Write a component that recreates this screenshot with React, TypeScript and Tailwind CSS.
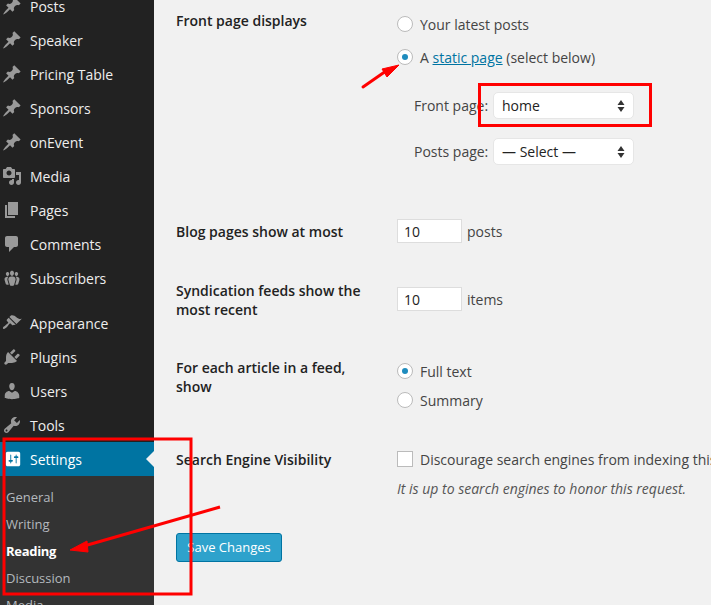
const icons = {
  pin: 'M10.44 3.02l1.82-1.82 6.36 6.35-1.83 1.82c-1.05-.68-2.48-.57-3.41.36l-.75.75c-.92.93-1.04 2.35-.35 3.41l-1.83 1.82-2.41-2.41-2.8 2.79c-.42.42-3.38 2.71-3.8 2.29s1.86-3.39 2.28-3.81l2.79-2.79L4.1 9.36l1.83-1.82c1.05.69 2.48.57 3.4-.36l.75-.75c.93-.92 1.05-2.35.36-3.41z',
  media: 'M13 11V4c0-.55-.45-1-1-1h-1.67L9 1H5L3.67 3H2c-.55 0-1 .45-1 1v7c0 .55.45 1 1 1h10c.55 0 1-.45 1-1zM7 4.5c1.38 0 2.5 1.12 2.5 2.5S8.38 9.5 7 9.5 4.5 8.38 4.5 7 5.62 4.5 7 4.5zM14 6h5v10.5c0 1.38-1.12 2.5-2.5 2.5S14 17.88 14 16.5s1.12-2.5 2.5-2.5c.17 0 .34.02.5.05V9h-3V6zm-4 8.05V13h2v3.5c0 1.38-1.12 2.5-2.5 2.5S7 17.88 7 16.5 8.12 14 9.5 14c.17 0 .34.02.5.05z',
  pages: 'M6 15V2h10v13H6zm-1 1h8v2H3V5h2v11z',
  comments: 'M5 2h9c1.1 0 2 .9 2 2v7c0 1.1-.9 2-2 2h-2l-5 5v-5H5c-1.1 0-2-.9-2-2V4c0-1.1.9-2 2-2z',
  groups: 'M8.03 4.46c-.29 1.28.55 3.46 1.97 3.46 1.41 0 2.25-2.18 1.96-3.46-.22-.98-1.08-1.63-1.96-1.63-.89 0-1.74.65-1.97 1.63zm-4.13.9c-.25 1.08.47 2.93 1.67 2.93s1.92-1.85 1.67-2.93c-.19-.83-.92-1.39-1.67-1.39s-1.48.56-1.67 1.39zm8.86 0c-.25 1.08.47 2.93 1.66 2.93 1.2 0 1.92-1.85 1.67-2.93-.19-.83-.92-1.39-1.67-1.39-.74 0-1.47.56-1.66 1.39zm-.59 11.43l1.25-4.3C14.2 10 12.71 8.47 10 8.47c-2.72 0-4.21 1.53-3.44 4.02l1.26 4.3C8.05 17.51 9 18 10 18c.98 0 1.94-.49 2.17-1.21zm-6.1-7.63c-.49.67-.96 1.83-.42 3.59l1.12 3.79c-.34.2-.77.31-1.2.31-.85 0-1.65-.41-1.85-1.03l-1.07-3.65c-.65-2.11.61-3.4 2.92-3.4.27 0 .54.02.79.06-.1.1-.2.22-.29.33zm8.35-.39c2.31 0 3.58 1.29 2.92 3.4l-1.07 3.65c-.2.62-1 1.03-1.85 1.03-.43 0-.86-.11-1.2-.31l1.11-3.77c.55-1.78.08-2.94-.42-3.61-.08-.11-.18-.23-.28-.33.25-.04.51-.06.79-.06z',
  appearance: 'M14.48 11.06L7.41 3.99l1.5-1.5c.5-.56 2.3-.47 3.51.32 1.21.8 1.43 1.28 2.91 2.1 1.18.64 2.45 1.26 4.45.85zm-.71.71L6.7 4.7 4.93 6.47c-.39.39-.39 1.02 0 1.41l1.06 1.06c.39.39.39 1.03 0 1.42-.6.6-1.43 1.11-2.21 1.69-.35.26-.7.53-1.01.84C1.43 13.23.4 14.85 1.2 15.65c.8.8 2.42-.23 3.76-1.57.31-.31.58-.66.85-1.02.57-.78 1.08-1.61 1.69-2.21.39-.39 1.02-.39 1.41 0l1.06 1.06c.39.39 1.02.39 1.41 0z',
  plugins: 'M13.11 4.36L9.87 7.6 8 5.73l3.24-3.24c.35-.34 1.05-.2 1.56.32.52.51.66 1.21.31 1.55zm-8 1.77l.91-1.12 9.01 9.01-1.19.84c-.71.71-2.63 1.16-3.82 1.16H6.14L4.9 17.26c-.59.59-1.54.59-2.12 0-.59-.58-.59-1.53 0-2.12l1.24-1.24v-3.88c0-1.13.4-3.19 1.09-3.89zm7.26 3.97l3.24-3.24c.34-.35 1.04-.21 1.55.31.52.51.66 1.21.31 1.55l-3.24 3.25z',
  users: 'M10 9.25c-2.27 0-2.73-3.44-2.73-3.44C7 4.02 7.82 2 9.97 2c2.16 0 2.98 2.02 2.71 3.81 0 0-.41 3.44-2.68 3.44zm0 2.57L12.72 10c2.39 0 4.52 2.33 4.52 4.53v2.49s-3.65 1.13-7.24 1.13c-3.65 0-7.24-1.13-7.24-1.13v-2.49c0-2.25 1.94-4.48 4.47-4.48z',
  tools: 'M16.68 9.77c-1.34 1.34-3.3 1.67-4.95.99l-5.41 6.52c-.99.99-2.59.99-3.58 0s-.99-2.59 0-3.57l6.52-5.42c-.68-1.65-.35-3.61.99-4.95 1.28-1.28 3.12-1.62 4.72-1.06l-2.89 2.89 2.82 2.82 2.86-2.87c.53 1.58.18 3.39-1.08 4.65zM3.81 16.21c.4.39 1.04.39 1.43 0 .4-.4.4-1.04 0-1.43-.39-.4-1.03-.4-1.43 0-.39.39-.39 1.03 0 1.43z',
  settings: 'M18 16V4c0-1.1-.9-2-2-2H4c-1.1 0-2 .9-2 2v12c0 1.1.9 2 2 2h12c1.1 0 2-.9 2-2zM8 11h1c.55 0 1 .45 1 1s-.45 1-1 1H8v1.5c0 .28-.22.5-.5.5s-.5-.22-.5-.5V13H6c-.55 0-1-.45-1-1s.45-1 1-1h1V5.5c0-.28.22-.5.5-.5s.5.22.5.5V11zm5-2h-1c-.55 0-1-.45-1-1s.45-1 1-1h1V5.5c0-.28.22-.5.5-.5s.5.22.5.5V7h1c.55 0 1 .45 1 1s-.45 1-1 1h-1v5.5c0 .28-.22.5-.5.5s-.5-.22-.5-.5V9z',
};

function MenuIcon({ d, className = 'ml-[2px] h-5 w-5 text-[#999]' }: { d: string; className?: string }) {
  return (
    <svg viewBox="0 0 20 20" className={`mr-[8px] shrink-0 ${className}`} fill="currentColor">
      <path d={d} fillRule="evenodd" />
    </svg>
  );
}

function MenuItem({ label, icon }: { label: string; icon: string }) {
  return (
    <div className="flex h-[34px] items-center text-[14px] text-[#eee]">
      <MenuIcon d={icon} />
      {label}
    </div>
  );
}

function Radio({ checked = false }: { checked?: boolean }) {
  return (
    <span className="mr-[7px] flex h-4 w-4 shrink-0 items-center justify-center rounded-full border border-[#bbb] bg-white">
      {checked && <span className="h-[6px] w-[6px] rounded-full bg-[#1e8cbe]" />}
    </span>
  );
}

function FakeSelect({ value }: { value: string }) {
  return (
    <div className="flex h-[27px] w-[141px] items-center justify-between rounded-[5px] border border-[#e6e6e6] bg-white pl-2 pr-[8px] text-[14px] text-[#222]">
      {value}
      <svg viewBox="0 0 8 12" className="h-3 w-2 text-[#333]" fill="currentColor">
        <path d="M4 0l3.5 5H.5zM4 12L.5 7h7z" />
      </svg>
    </div>
  );
}

function TextBox({ value }: { value: string }) {
  return (
    <div className="mr-[5px] flex h-[24px] w-[65px] items-center border border-[#ddd] bg-white pl-[6px] text-[14px] text-[#222]">
      {value}
    </div>
  );
}

export default function App() {
  return (
    <div className="relative flex h-[605px] w-[711px] overflow-hidden bg-[#f1f1f1] font-['Open_Sans',sans-serif] text-[14px] text-[#444]">
      <aside className="w-[154px] shrink-0 bg-[#222]">
        <div className="-mt-[11px]">
          <MenuItem label="Posts" icon={icons.pin} />
          <MenuItem label="Speaker" icon={icons.pin} />
          <MenuItem label="Pricing Table" icon={icons.pin} />
          <MenuItem label="Sponsors" icon={icons.pin} />
          <MenuItem label="onEvent" icon={icons.pin} />
          <MenuItem label="Media" icon={icons.media} />
          <MenuItem label="Pages" icon={icons.pages} />
          <MenuItem label="Comments" icon={icons.comments} />
          <MenuItem label="Subscribers" icon={icons.groups} />
          <div className="h-[11px]" />
          <MenuItem label="Appearance" icon={icons.appearance} />
          <MenuItem label="Plugins" icon={icons.plugins} />
          <MenuItem label="Users" icon={icons.users} />
          <MenuItem label="Tools" icon={icons.tools} />
          <div className="relative flex h-[34px] items-center bg-[#0074a2] text-[14px] text-white">
            <MenuIcon d={icons.settings} className="ml-[4px] h-[18px] w-[18px] text-white" />
            Settings
            <span className="absolute right-0 top-[9px] h-0 w-0 border-y-[8px] border-r-[8px] border-y-transparent border-r-[#f1f1f1]" />
          </div>
          <div className="bg-[#333] pl-[6px] pt-[8px] text-[13px] text-[#b4b9be]">
            <div className="flex h-[27px] items-center">General</div>
            <div className="flex h-[27px] items-center">Writing</div>
            <div className="flex h-[27px] items-center font-bold tracking-[-0.3px] text-white">Reading</div>
            <div className="flex h-[27px] items-center">Discussion</div>
            <div className="flex h-[27px] items-center">Media</div>
          </div>
        </div>
      </aside>

      <main className="min-w-0 flex-1 pl-[22px] pt-[10px]">
        <div className="flex">
          <div className="w-[221px] shrink-0 font-semibold text-[#222]">Front page displays</div>
          <div>
            <div className="mt-[4px] flex h-[20px] items-center"><Radio />Your latest posts</div>
            <div className="mt-[13px] flex h-[20px] items-center">
              <Radio checked />
              A&nbsp;<a className="text-[#0074a2] underline">static page</a>&nbsp;(select below)
            </div>
            <div className="ml-[17px] mt-[25px] flex items-center">
              <span className="w-[79px]">Front page:</span>
              <FakeSelect value="home" />
            </div>
            <div className="ml-[17px] mt-[19px] flex items-center">
              <span className="w-[79px]">Posts page:</span>
              <FakeSelect value="— Select —" />
            </div>
          </div>
        </div>

        <div className="mt-[54px] flex items-center">
          <div className="w-[221px] shrink-0 font-semibold text-[#222]">Blog pages show at most</div>
          <TextBox value="10" />posts
        </div>

        <div className="mt-[38px] flex">
          <div className="w-[221px] shrink-0 pr-3 font-semibold leading-[19px] text-[#222]">Syndication feeds show the most recent</div>
          <div className="flex items-center self-start pt-[6px]"><TextBox value="10" />items</div>
        </div>

        <div className="mt-[39px] flex">
          <div className="w-[221px] shrink-0 pr-5 font-semibold leading-[19px] text-[#222]">For each article in a feed, show</div>
          <div className="pt-[3px]">
            <div className="flex h-[20px] items-center"><Radio checked />Full text</div>
            <div className="mt-[9px] flex h-[20px] items-center"><Radio />Summary</div>
          </div>
        </div>

        <div className="mt-[39px] flex">
          <div className="w-[221px] shrink-0 font-semibold text-[#222]">Search Engine Visibility</div>
          <div className="min-w-0">
            <div className="flex h-[20px] items-center whitespace-nowrap">
              <span className="mr-[7px] h-4 w-4 shrink-0 border border-[#bbb] bg-white" />
              Discourage search engines from indexing this site
            </div>
            <div className="mt-[9px] whitespace-nowrap italic text-[#555]">It is up to search engines to honor this request.</div>
          </div>
        </div>

        <div className="mt-[34px] flex h-[29px] w-[106px] items-center justify-center rounded-[3px] border border-[#0074a2] bg-[#2ea2cc] text-[13px] text-white">
          Save Changes
        </div>
      </main>

      {/* red annotations drawn over the screenshot */}
      <svg className="pointer-events-none absolute inset-0" width="711" height="605" viewBox="0 0 711 605" fill="none">
        <rect x="4" y="439" width="187" height="155" stroke="#f00" strokeWidth="3" />
        <rect x="479.5" y="84.5" width="171" height="41" stroke="#f00" strokeWidth="3" />
        <path d="M220 507L84 546" stroke="#f00" strokeWidth="3" />
        <path d="M70 550L87 541 88 552z" fill="#f00" stroke="#f00" strokeWidth="1" />
        <path d="M363 87L386 71" stroke="#f00" strokeWidth="3" strokeLinecap="round" />
        <path d="M399 65L382 69 387 77z" fill="#f00" stroke="#f00" />
      </svg>
    </div>
  );
}
